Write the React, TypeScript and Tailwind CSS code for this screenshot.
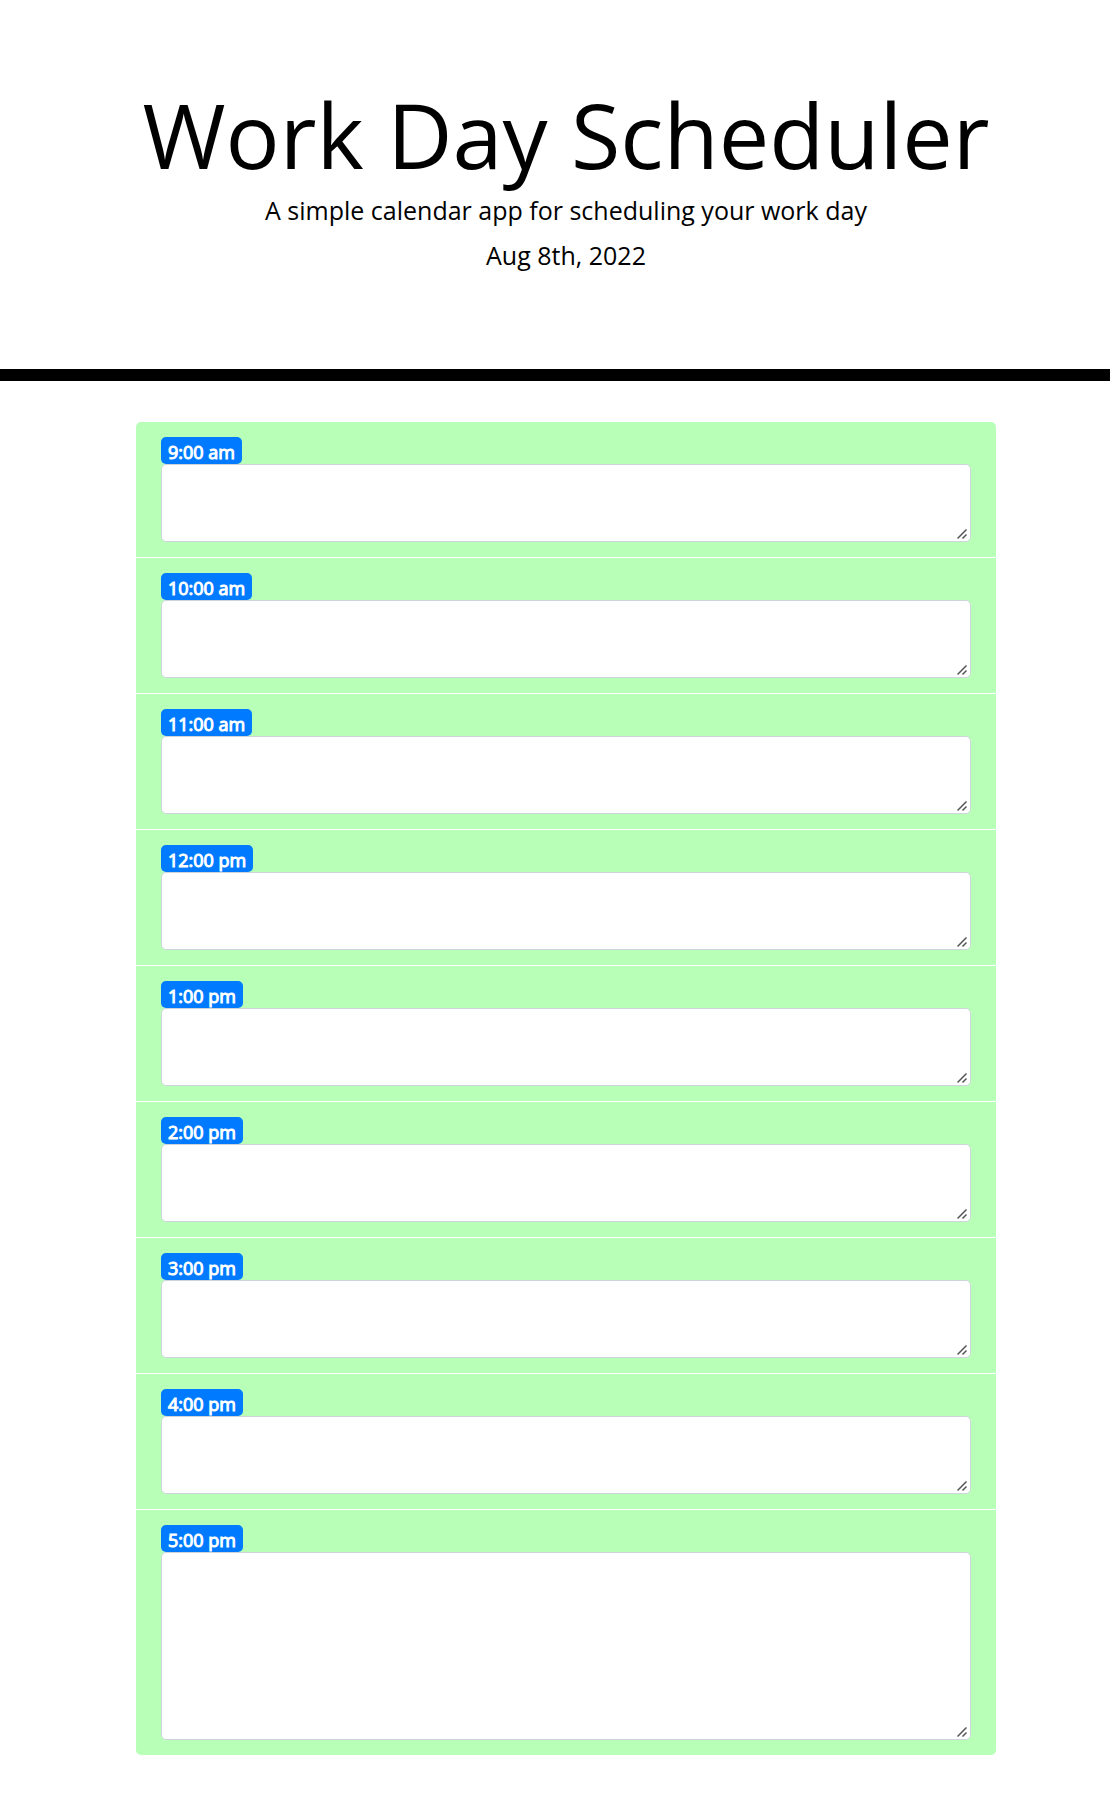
const hours = [
  '9:00 am',
  '10:00 am',
  '11:00 am',
  '12:00 pm',
  '1:00 pm',
  '2:00 pm',
  '3:00 pm',
  '4:00 pm',
  '5:00 pm',
];

function ResizeGrip() {
  return (
    <svg
      aria-hidden="true"
      viewBox="0 0 10 10"
      className="pointer-events-none absolute right-1 bottom-[3px] size-[10px] text-[#555]"
    >
      <path d="M0.5 9.5 L9.5 0.5 M5.5 9.5 L9.5 5.5" stroke="currentColor" strokeWidth="1.5" fill="none" />
    </svg>
  );
}

function TimeBlock({ hour, tall }: { hour: string; tall: boolean }) {
  const id = 'hour-' + hour.replace(/[: ]/g, '-');
  return (
    <li className="flex flex-col items-start border-b border-white bg-[#b8ffb8] px-[25px] py-[15px] last:border-b-0">
      <label
        htmlFor={id}
        className="flex h-[27px] items-center rounded-[5px] bg-[#007bff] px-[7px] pt-[2px] text-[18px] leading-none text-white [-webkit-text-stroke:1px_white]"
      >
        {hour}
      </label>
      <div className="relative w-full">
        <textarea
          id={id}
          className={
            'block w-full resize-y rounded-[5px] border border-[#ced4da] bg-white px-4 py-2 text-xl text-[#495057] [&::-webkit-resizer]:bg-transparent ' +
            (tall ? 'h-[188px]' : 'h-[78px]')
          }
        />
        <ResizeGrip />
      </div>
    </li>
  );
}

export default function App() {
  return (
    <div className="min-h-screen bg-white font-['Open_Sans',sans-serif] text-black">
      <header className="border-b-[12px] border-black pt-20 pb-[95px] pl-[22px] text-center">
        <h1 className="text-[90px] leading-[108px] font-normal">Work Day Scheduler</h1>
        <p className="mt-[3px] text-[25px] leading-[38px]">A simple calendar app for scheduling your work day</p>
        <p className="mt-[7px] text-[25px] leading-[38px]">Aug 8th, 2022</p>
      </header>
      <main className="pt-[41px] pb-[50px] pl-[22px]">
        <ul className="mx-auto w-full max-w-[860px] overflow-hidden rounded-[5px]">
          {hours.map((hour, i) => (
            <TimeBlock key={hour} hour={hour} tall={i === hours.length - 1} />
          ))}
        </ul>
      </main>
    </div>
  );
}
